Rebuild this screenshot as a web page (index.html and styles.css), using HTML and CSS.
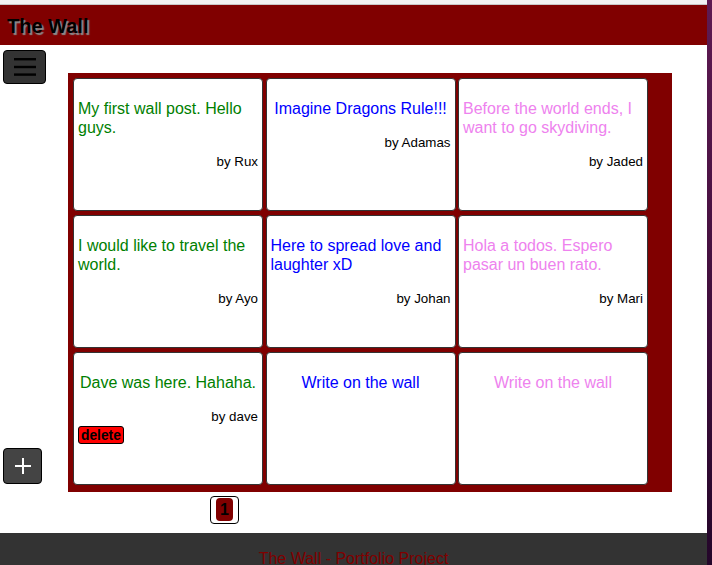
FILE: index.html
```html
<!DOCTYPE html>
<html>
<head>
<meta charset="utf-8">
<link rel="stylesheet" href="styles.css">
</head>
<body>
<div class="page">
  <div class="topline"></div>
  <header class="header"><h1 class="title">The Wall</h1></header>
  <main class="main">
    <aside class="side">
      <button class="btn menu" aria-label="menu">
        <svg width="22" height="18" viewBox="0 0 22 18"><rect x="0" y="0" width="22" height="2.4" fill="#000"/><rect x="0" y="7.8" width="22" height="2.4" fill="#000"/><rect x="0" y="15.4" width="22" height="2.4" fill="#000"/></svg>
      </button>
      <button class="btn plus" aria-label="add">
        <svg width="16" height="16" viewBox="0 0 16 16"><rect x="7" y="0" width="2" height="16" fill="#fff"/><rect x="0" y="7" width="16" height="2" fill="#fff"/></svg>
      </button>
    </aside>
    <section class="wall">
      <div class="cell">
        <p class="msg green">My first wall post. Hello guys.</p>
        <p class="by">by Rux</p>
      </div>
      <div class="cell">
        <p class="msg blue">Imagine Dragons Rule!!!</p>
        <p class="by">by Adamas</p>
      </div>
      <div class="cell">
        <p class="msg violet">Before the world ends, I want to go skydiving.</p>
        <p class="by">by Jaded</p>
      </div>
      <div class="cell">
        <p class="msg green">I would like to travel the world.</p>
        <p class="by">by Ayo</p>
      </div>
      <div class="cell">
        <p class="msg blue">Here to spread love and laughter xD</p>
        <p class="by">by Johan</p>
      </div>
      <div class="cell">
        <p class="msg violet">Hola a todos. Espero pasar un buen rato.</p>
        <p class="by">by Mari</p>
      </div>
      <div class="cell">
        <p class="msg green">Dave was here. Hahaha.</p>
        <p class="by">by dave</p>
        <button class="delete">delete</button>
      </div>
      <div class="cell">
        <p class="msg blue">Write on the wall</p>
      </div>
      <div class="cell">
        <p class="msg violet">Write on the wall</p>
      </div>
    </section>
    <nav class="pager"><span class="pagebtn"><span class="pagenum">1</span></span></nav>
  </main>
  <footer class="footer">The Wall - Portfolio Project</footer>
</div>
</body>
</html>
```
FILE: styles.css
```css
html {
  background: linear-gradient(to bottom, #5e1a52 0%, #3e0d3a 60%, #24062a 100%);
  height: 100%;
}
body {
  margin: 0;
  font-family: "Liberation Sans", Arial, sans-serif;
  overflow: hidden;
}
.page {
  width: 707px;
  background: #fff;
  min-height: 565px;
}
.topline {
  height: 4px;
  background: #f2f2f2;
  border-bottom: 1px solid #c8c8c8;
}
.header {
  background: #800000;
  height: 40px;
  box-sizing: border-box;
  padding: 3px 0 0 7px;
  display: flex;
  align-items: center;
}
.title {
  margin: 0;
  font-size: 20px;
  font-weight: bold;
  color: #000;
  text-shadow: 2px 2px 1px #8a8a8a;
}
.main {
  display: grid;
  grid-template-columns: 68px auto;
  grid-template-rows: auto auto;
  justify-content: start;
}
.side {
  display: flex;
  flex-direction: column;
  justify-content: space-between;
  align-items: flex-start;
  padding: 5px 0 8px 3px;
}
.btn {
  display: flex;
  align-items: center;
  justify-content: center;
  border: 1px solid #000;
  border-radius: 4px;
  padding: 0;
  margin: 0;
}
.menu {
  width: 43px;
  height: 34px;
  background: #333;
}
.plus {
  width: 39px;
  height: 36px;
  background: #444;
}
.wall {
  margin-top: 28px;
  width: 594px;
  background: #800000;
  padding: 5px 5px 7px 5px;
  display: grid;
  grid-template-columns: repeat(3, 190px);
  grid-auto-rows: 133px;
  column-gap: 2.5px;
  row-gap: 4px;
}
.cell {
  box-sizing: border-box;
  background: #fff;
  border: 1px solid #333;
  border-radius: 4px;
  padding: 4px;
  display: flex;
  flex-direction: column;
  align-items: center;
}
.msg {
  margin: 16px 0 0 0;
  font-size: 16px;
  line-height: 19px;
}
.green { color: #008000; }
.blue { color: #0000ff; }
.violet { color: #ee82ee; }
.by {
  align-self: stretch;
  text-align: right;
  margin: 17px 0 0 0;
  font-size: 13.33px;
  line-height: 15px;
  color: #000;
}
.delete {
  align-self: flex-start;
  margin-top: 2px;
  background: #ff0000;
  border: 1px solid #000;
  border-radius: 3px;
  padding: 0 2px;
  height: 18px;
  font-family: "Liberation Sans", Arial, sans-serif;
  font-weight: bold;
  font-size: 13.8px;
  color: #000;
}
.pager {
  grid-column: 2;
  padding: 4px 0 0 142px;
  height: 28px;
}
.pagebtn {
  display: inline-flex;
  border: 1px solid #000;
  border-radius: 4px;
  padding: 1px 5px 2px 5px;
  background: #fff;
}
.pagenum {
  display: flex;
  align-items: center;
  justify-content: center;
  width: 17px;
  height: 23px;
  background: #800000;
  border-radius: 4px;
  font-weight: bold;
  font-size: 16px;
  color: #000;
}
.footer {
  margin-top: 9px;
  background: #333;
  color: #800000;
  text-align: center;
  font-size: 16px;
  padding: 17px 0 18px 0;
  height: 40px;
}
```
